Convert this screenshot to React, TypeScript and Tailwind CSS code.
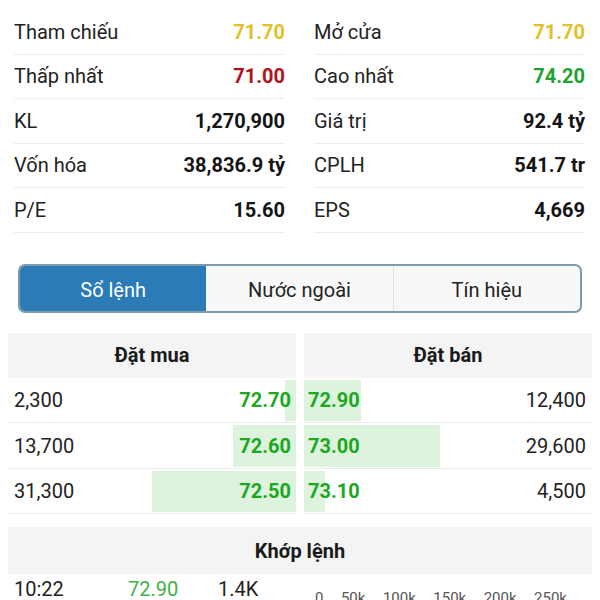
import React from 'react'

type Stat = { label: string; value: string; color: string }

const leftStats: Stat[] = [
  { label: 'Tham chiếu', value: '71.70', color: 'text-[#e3bf2a]' },
  { label: 'Thấp nhất', value: '71.00', color: 'text-[#b3111c]' },
  { label: 'KL', value: '1,270,900', color: 'text-[#151515]' },
  { label: 'Vốn hóa', value: '38,836.9 tỷ', color: 'text-[#151515]' },
  { label: 'P/E', value: '15.60', color: 'text-[#151515]' },
]

const rightStats: Stat[] = [
  { label: 'Mở cửa', value: '71.70', color: 'text-[#e3bf2a]' },
  { label: 'Cao nhất', value: '74.20', color: 'text-[#1ea332]' },
  { label: 'Giá trị', value: '92.4 tỷ', color: 'text-[#151515]' },
  { label: 'CPLH', value: '541.7 tr', color: 'text-[#151515]' },
  { label: 'EPS', value: '4,669', color: 'text-[#151515]' },
]

const bids = [
  { vol: 2300, price: '72.70' },
  { vol: 13700, price: '72.60' },
  { vol: 31300, price: '72.50' },
]

const asks = [
  { vol: 12400, price: '72.90' },
  { vol: 29600, price: '73.00' },
  { vol: 4500, price: '73.10' },
]

const SCALE = 62600
const fmt = (n: number) => n.toLocaleString('en-US')

function StatColumn({ items }: { items: Stat[] }) {
  return (
    <div className="flex flex-col">
      {items.map(({ label, value, color }) => (
        <div key={label} className="h-[44.5px] flex items-center justify-between border-b border-[#ececec]">
          <span className="text-[20px] text-[#222]">{label}</span>
          <span className={`text-[20px] font-bold ${color}`}>{value}</span>
        </div>
      ))}
    </div>
  )
}

export default function App() {
  const tabs = ['Sổ lệnh', 'Nước ngoài', 'Tín hiệu']
  const axis = ['0', '50k', '100k', '150k', '200k', '250k']

  return (
    <div className="w-[600px] h-[600px] overflow-hidden bg-white" style={{ fontFamily: 'Roboto, "Noto Sans", sans-serif' }}>
      <div className="grid grid-cols-2 gap-[29px] pl-[14px] pr-[15px] pt-[10px]">
        <StatColumn items={leftStats} />
        <StatColumn items={rightStats} />
      </div>

      <div className="mx-[18px] mt-[31px] h-[49px] flex rounded-[7px] border-2 border-[#7c9bab] overflow-hidden bg-[#f8f8f8]">
        {tabs.map((t, i) => (
          <div
            key={t}
            className={`flex-1 flex items-center justify-center pt-[3px] text-[20px] ${
              i === 0 ? 'bg-[#2a7bb6] text-white' : 'text-[#222]'
            } ${i === 2 ? 'border-l border-[#e2e2e2]' : ''}`}
          >
            {t}
          </div>
        ))}
      </div>

      <div className="grid grid-cols-2 gap-[8px] px-[8px] mt-[20px]">
        <div>
          <div className="h-[45px] bg-[#f4f4f4] flex items-center justify-center text-[20px] font-bold text-[#1a1a1a]">Đặt mua</div>
          {bids.map((b) => (
            <div key={b.price} className="relative h-[44.5px] mt-px border-b border-[#ececec] flex items-center justify-between pl-[6px] pr-[5px]">
              <div className="absolute right-0 top-[1px] bottom-[1px] bg-[#ddf3dd]" style={{ width: `${(b.vol / SCALE) * 100}%` }} />
              <span className="relative text-[20px] text-[#222]">{fmt(b.vol)}</span>
              <span className="relative text-[20px] font-bold text-[#1ba81f]">{b.price}</span>
            </div>
          ))}
        </div>
        <div>
          <div className="h-[45px] bg-[#f4f4f4] flex items-center justify-center text-[20px] font-bold text-[#1a1a1a]">Đặt bán</div>
          {asks.map((a) => (
            <div key={a.price} className="relative h-[44.5px] mt-px border-b border-[#ececec] flex items-center justify-between pl-[4px] pr-[6px]">
              <div className="absolute left-0 top-[1px] bottom-[1px] bg-[#ddf3dd]" style={{ width: `${(a.vol / SCALE) * 100}%` }} />
              <span className="relative text-[20px] font-bold text-[#1ba81f]">{a.price}</span>
              <span className="relative text-[20px] text-[#222]">{fmt(a.vol)}</span>
            </div>
          ))}
        </div>
      </div>

      <div className="mx-[8px] mt-[13px] h-[47px] bg-[#f4f4f4] flex items-center justify-center text-[20px] font-bold text-[#1a1a1a]">
        Khớp lệnh
      </div>

      <div className="grid grid-cols-2 gap-[8px] px-[8px]">
        <div className="h-[30px] flex items-center pl-[6px] text-[20px] text-[#222]">
          <span className="w-[114px]">10:22</span>
          <span className="w-[90px] text-[#3db24a]">72.90</span>
          <span>1.4K</span>
        </div>
        <div className="flex justify-between pl-[11px] pr-[25px] pt-[13px] text-[15px] text-[#555]">
          {axis.map((a) => (
            <span key={a}>{a}</span>
          ))}
        </div>
      </div>
    </div>
  )
}
